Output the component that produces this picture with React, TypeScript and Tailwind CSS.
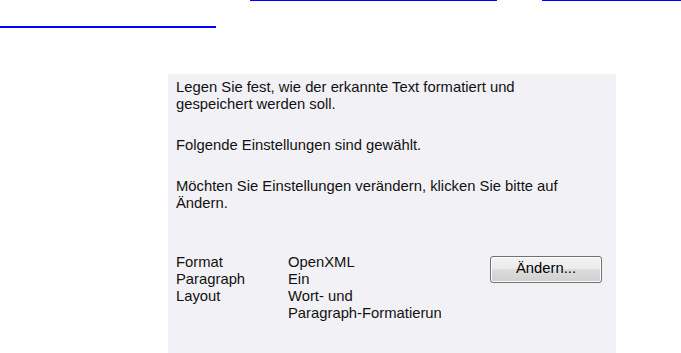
import React from "react";

export default function App() {
  return (
    <div
      className="w-[681px] h-[353px] bg-white overflow-hidden text-black"
      style={{ fontFamily: '"Liberation Sans", Arial, sans-serif' }}
    >
      <div className="flex h-[1px]">
        <div className="ml-[250px] w-[247px] h-[1px] bg-[#0000ff]" />
        <div className="ml-[45px] flex-1 h-[1px] bg-[#0000ff]" />
      </div>
      <div className="mt-[25px] w-[216px] h-[2px] bg-[#0000ff]" />
      <div className="mt-[46px] ml-[168px] w-[448px] h-[280px] bg-[#f2f1f5] pt-[5px] pl-[8px] pr-[14px] text-[14.8px] leading-[17px] text-[#111]">
        <p>
          Legen Sie fest, wie der erkannte Text formatiert und
          <br />
          gespeichert werden soll.
        </p>
        <p className="mt-[24px]">Folgende Einstellungen sind gewählt.</p>
        <p className="mt-[24px]">
          Möchten Sie Einstellungen verändern, klicken Sie bitte auf
          <br />
          Ändern.
        </p>
        <div className="mt-[42px] flex">
          <div className="grid grid-cols-[112px_153px]">
            <span>Format</span>
            <span>OpenXML</span>
            <span>Paragraph</span>
            <span>Ein</span>
            <span>Layout</span>
            <span className="whitespace-nowrap overflow-hidden">
              Wort- und
              <br />
              Paragraph-Formatierung
            </span>
          </div>
          <div className="ml-auto mt-[2px]">
            <button className="w-[112px] h-[27px] rounded-[3px] border border-[#707070] bg-[linear-gradient(#f2f2f2_0%,#ebebeb_50%,#dddddd_50%,#cfcfcf_100%)] shadow-[inset_0_0_0_1px_#fcfcfc] text-[14.8px] leading-[17px] text-black pb-[2px]">
              Ändern...
            </button>
          </div>
        </div>
      </div>
    </div>
  );
}
